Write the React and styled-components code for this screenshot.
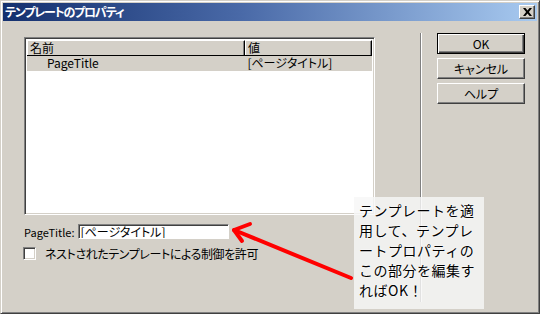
import React from "react";
import styled, { createGlobalStyle } from "styled-components";

const Global = createGlobalStyle`
  html, body { margin: 0; padding: 0; background: #d4d0c8; }
  body { font-family: "Noto Sans CJK JP", "Liberation Sans", sans-serif; }
`;

const font = `"Noto Sans CJK JP", "Liberation Sans", sans-serif`;

const Window = styled.div`
  position: relative;
  box-sizing: border-box;
  width: 540px;
  height: 314px;
  background: #d4d0c8;
  border: 1px solid;
  border-color: #d4d0c8 #404040 #404040 #d4d0c8;
  box-shadow: inset 1px 1px #ffffff, inset -1px -1px #808080;
  padding: 2px;
  display: flex;
  flex-direction: column;
  font-family: ${font};
  font-size: 12px;
  color: #000;
  overflow: hidden;
`;

const TitleBar = styled.div`
  height: 18px;
  display: flex;
  align-items: center;
  justify-content: space-between;
  padding: 0 2px 0 2px;
  background: linear-gradient(to right, #14306e, #4a6aa8 45%, #a8caf0);
`;

const Title = styled.span`
  color: #fff;
  font-weight: bold;
  font-size: 12px;
  font-feature-settings: "palt";
  letter-spacing: -1.2px;
  line-height: 18px;
`;

const CloseButton = styled.div`
  box-sizing: border-box;
  width: 16px;
  height: 14px;
  background: #d4d0c8;
  border: 1px solid;
  border-color: #ffffff #404040 #404040 #ffffff;
  box-shadow: inset -1px -1px #808080;
  display: flex;
  align-items: center;
  justify-content: center;
`;

const Body = styled.div`
  display: flex;
  padding: 12px 0 0 21px;
  flex: 1;
`;

const LeftColumn = styled.div`
  width: 351px;
  padding-top: 4px;
  display: flex;
  flex-direction: column;
`;

const ListBox = styled.div`
  box-sizing: border-box;
  width: 351px;
  height: 178px;
  background: #fff;
  border: 1px solid;
  border-color: #808080 #ffffff #ffffff #808080;
  box-shadow: inset 1px 1px #404040, inset -1px -1px #d4d0c8;
  padding: 2px;
  display: flex;
  flex-direction: column;
`;

const HeaderRow = styled.div`
  display: flex;
  height: 15px;
  border-bottom: 1px solid #000;
  background: #d4d0c8;
`;

const HeaderCell = styled.div`
  box-sizing: border-box;
  width: ${(p) => p.$w}px;
  flex: ${(p) => (p.$grow ? 1 : "none")};
  height: 15px;
  line-height: 14px;
  padding-left: 2px;
  border-top: 1px solid #fff;
  border-left: 1px solid #fff;
  border-right: 1px solid #000;
  box-shadow: inset -1px 0 #808080;
`;

const DataRow = styled.div`
  display: flex;
  height: 15px;
  background: #d4d0c8;
  line-height: 14px;
`;

const DataCell = styled.div`
  box-sizing: border-box;
  width: ${(p) => p.$w}px;
  padding-left: ${(p) => p.$pad}px;
  font-feature-settings: "palt";
  white-space: nowrap;
`;

const FieldRow = styled.div`
  display: flex;
  align-items: center;
  margin-top: 9px;
  height: 15px;
`;

const Label = styled.span`
  font-size: 11px;
  margin-right: 3px;
`;

const TextBox = styled.div`
  box-sizing: border-box;
  width: 151px;
  height: 15px;
  background: #fff;
  border: 1px solid;
  border-color: #808080 #ffffff #ffffff #808080;
  box-shadow: inset 1px 1px #404040;
  padding-left: 2px;
  line-height: 13px;
  font-feature-settings: "palt";
  white-space: nowrap;
  overflow: hidden;
`;

const CheckRow = styled.div`
  display: flex;
  align-items: center;
  margin-top: 6px;
  margin-left: -1px;
`;

const CheckBox = styled.div`
  box-sizing: border-box;
  width: 13px;
  height: 13px;
  background: #fff;
  border: 1px solid;
  border-color: #808080 #ffffff #ffffff #808080;
  box-shadow: inset 1px 1px #404040, inset -1px -1px #d4d0c8;
  margin-right: 9px;
`;

const CheckLabel = styled.span`
  font-feature-settings: "palt";
  letter-spacing: -0.4px;
`;

const Separator = styled.div`
  width: 1px;
  height: 269px;
  margin-left: 45px;
  background: #808080;
  border-right: 1px solid #fff;
`;

const ButtonColumn = styled.div`
  margin-left: 15px;
  display: flex;
  flex-direction: column;
  gap: 4px;
`;

const Button = styled.div`
  box-sizing: border-box;
  width: 88px;
  height: 21px;
  display: flex;
  align-items: center;
  justify-content: center;
  background: #d4d0c8;
  font-feature-settings: "palt";
  border: 1px solid;
  border-color: ${(p) => (p.$default ? "#000" : "#fff #404040 #404040 #fff")};
  box-shadow: ${(p) =>
    p.$default
      ? "inset 1px 1px #fff, inset -1px -1px #404040, inset -2px -2px #808080"
      : "inset -1px -1px #808080"};
`;

const Arrow = styled.svg`
  position: absolute;
  left: 225px;
  top: 215px;
  overflow: visible;
`;

const Callout = styled.div`
  position: absolute;
  left: 353px;
  top: 196px;
  width: 130px;
  height: 112px;
  box-sizing: border-box;
  padding: 3px 0 0 5px;
  background: rgba(246, 246, 246, 0.82);
  font-size: 14px;
  line-height: 20px;
  letter-spacing: 0.5px;
  color: #000;
  text-shadow: 0 0 2px #fff, 0 0 2px #fff;
`;

export default function App() {
  return (
    <>
      <Global />
      <Window>
        <TitleBar>
          <Title>テンプレートのプロパティ</Title>
          <CloseButton>
            <svg width="9" height="8" viewBox="0 0 9 8">
              <path d="M0 0h2.4l2.1 2.5 2.1-2.5H9L5.9 4 9 8H6.6L4.5 5.5 2.4 8H0l3.1-4z" fill="#000" />
            </svg>
          </CloseButton>
        </TitleBar>
        <Body>
          <LeftColumn>
            <ListBox>
              <HeaderRow>
                <HeaderCell $w={218}>名前</HeaderCell>
                <HeaderCell $grow>値</HeaderCell>
              </HeaderRow>
              <DataRow>
                <DataCell $w={218} $pad={20}>PageTitle</DataCell>
                <DataCell $w={128} $pad={3}>[ページタイトル]</DataCell>
              </DataRow>
            </ListBox>
            <FieldRow>
              <Label>PageTitle:</Label>
              <TextBox>[ページタイトル]</TextBox>
            </FieldRow>
            <CheckRow>
              <CheckBox />
              <CheckLabel>ネストされたテンプレートによる制御を許可</CheckLabel>
            </CheckRow>
          </LeftColumn>
          <Separator />
          <ButtonColumn>
            <Button $default>OK</Button>
            <Button>キャンセル</Button>
            <Button>ヘルプ</Button>
          </ButtonColumn>
        </Body>
        <Arrow width="135" height="70" viewBox="0 0 135 70">
          <g stroke="#ff0000" strokeWidth="4" strokeLinecap="round" strokeLinejoin="round" fill="none">
            <path d="M24 8 L8 14 L16 25" />
            <path d="M8 14 L125 62" />
          </g>
        </Arrow>
        <Callout>
          テンプレートを適<br />
          用して、テンプレ<br />
          ートプロパティの<br />
          この部分を編集す<br />
          ればOK！
        </Callout>
      </Window>
    </>
  );
}
